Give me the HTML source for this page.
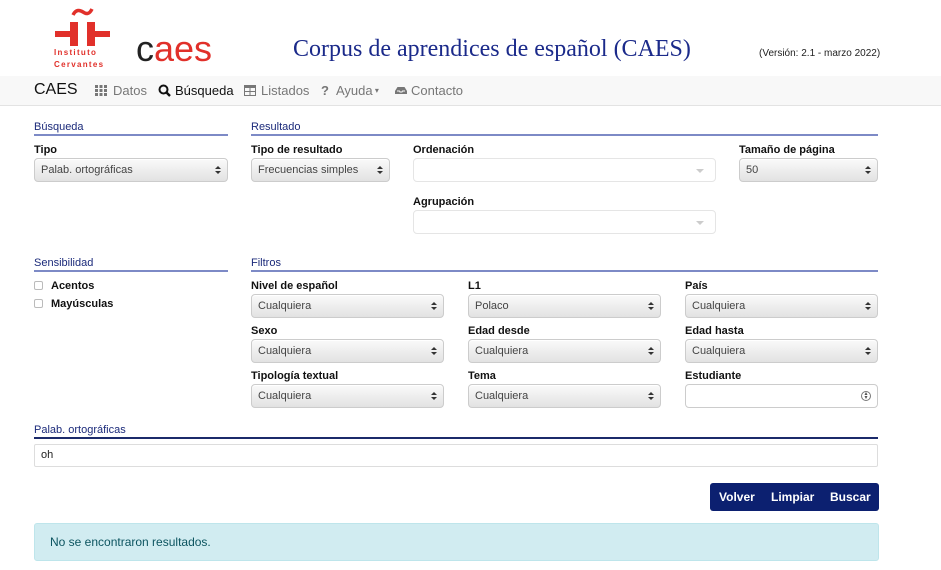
<!DOCTYPE html>
<html><head><meta charset="utf-8"><style>
*{box-sizing:border-box;margin:0;padding:0}
body{width:941px;height:570px;background:#fff;font-family:"Liberation Sans",Arial,sans-serif;position:relative;overflow:hidden;color:#212529}
.a{position:absolute}
.h{position:absolute;font-size:11px;color:#1b2a7a;border-bottom:2px solid #7d8ac6;height:15px;line-height:12px}
.l{position:absolute;font-size:11px;font-weight:bold;color:#111}
.s{position:absolute;height:24px;border:1px solid #ccc;border-radius:4px;background:linear-gradient(#fafafa,#e2e2e2);font-size:11px;color:#444;padding:0 0 0 6px;line-height:22px;box-shadow:inset 0 1px 0 #fff}
.s:after{content:"";position:absolute;right:6px;top:7px;width:0;height:0;border-left:3px solid transparent;border-right:3px solid transparent;border-bottom:3px solid #333}
.s:before{content:"";position:absolute;right:6px;top:12px;width:0;height:0;border-left:3px solid transparent;border-right:3px solid transparent;border-top:3px solid #333}
.e{position:absolute;height:24px;border:1px solid #e5e5e5;border-radius:4px;background:#fff}
.e:after{content:"";position:absolute;right:11px;top:10px;border-left:4px solid transparent;border-right:4px solid transparent;border-top:4px solid #ccc}
.n{position:absolute;top:83px;font-size:13px;color:#777}
.cb{display:inline-block;width:9px;height:9px;border:1px solid #bbb;border-radius:2px;margin-right:8px;vertical-align:-1px}
</style></head><body>
<svg class="a" style="left:70px;top:5px" width="26" height="14" viewBox="0 0 26 14"><path d="M3 10C6 4 10 5 13 7S19 10 22 4" fill="none" stroke="#e1302a" stroke-width="3.5"/></svg>
<div class="a" style="left:70px;top:22px;width:8px;height:24px;background:#e1302a"></div>
<div class="a" style="left:87px;top:22px;width:8px;height:24px;background:#e1302a"></div>
<div class="a" style="left:55px;top:31px;width:15px;height:6px;background:#e1302a"></div>
<div class="a" style="left:95px;top:31px;width:15px;height:6px;background:#e1302a"></div>
<div class="a" style="left:54px;top:47px;font-size:8px;font-weight:bold;color:#e1302a;letter-spacing:1.3px;line-height:12px">Instituto<br>Cervantes</div>
<div class="a" style="left:136px;top:28px;font-size:36px;letter-spacing:0;line-height:42px"><span style="color:#222">c</span><span style="color:#e1302a">aes</span></div>
<div class="a" style="left:293px;top:36px;font-family:'Liberation Serif',serif;font-size:24px;color:#1b2a8a">Corpus de aprendices de español (CAES)</div>
<div class="a" style="left:759px;top:48px;font-size:10px;color:#222">(Versión: 2.1 - marzo 2022)</div>
<div class="a" style="left:0;top:76px;width:941px;height:30px;background:#f8f8f8;border-bottom:1px solid #e3e3e3"></div>
<div class="a" style="left:34px;top:81px;font-size:16px;color:#111">CAES</div>
<svg class="a" style="left:95px;top:85px" width="12" height="11" viewBox="0 0 12 11"><g fill="#777"><rect x="0" y="0" width="3" height="3"/><rect x="4.5" y="0" width="3" height="3"/><rect x="9" y="0" width="3" height="3"/><rect x="0" y="4" width="3" height="3"/><rect x="4.5" y="4" width="3" height="3"/><rect x="9" y="4" width="3" height="3"/><rect x="0" y="8" width="3" height="3"/><rect x="4.5" y="8" width="3" height="3"/><rect x="9" y="8" width="3" height="3"/></g></svg>
<div class="n" style="left:113px">Datos</div>
<svg class="a" style="left:158px;top:84px" width="13" height="13" viewBox="0 0 13 13"><circle cx="5.5" cy="5.5" r="4" fill="none" stroke="#111" stroke-width="2"/><line x1="8.5" y1="8.5" x2="12" y2="12" stroke="#111" stroke-width="2.4"/></svg>
<div class="n" style="left:175px;color:#111">Búsqueda</div>
<svg class="a" style="left:244px;top:85px" width="12" height="11" viewBox="0 0 12 11"><rect x="0.5" y="0.5" width="11" height="10" fill="none" stroke="#777"/><rect x="0" y="0" width="12" height="3" fill="#777"/><line x1="6" y1="3" x2="6" y2="11" stroke="#777"/><line x1="0" y1="6.5" x2="12" y2="6.5" stroke="#777"/></svg>
<div class="n" style="left:261px">Listados</div>
<div class="n" style="left:321px;font-weight:bold">?</div>
<div class="n" style="left:336px">Ayuda<span style="font-size:8px;vertical-align:2px"> ▾</span></div>
<svg class="a" style="left:394px;top:86px" width="14" height="9" viewBox="0 0 14 9"><path d="M1 8V5L3.5 1h7L13 5v3z" fill="#777"/><path d="M3 5h2.5l.5 1h2l.5-1H11" stroke="#f8f8f8" fill="none"/></svg>
<div class="n" style="left:411px">Contacto</div>
<div class="h" style="left:34px;top:121px;width:194px">Búsqueda</div>
<div class="l" style="left:34px;top:144px">Tipo</div>
<div class="s" style="left:34px;top:158px;width:194px">Palab. ortográficas</div>
<div class="h" style="left:251px;top:121px;width:627px">Resultado</div>
<div class="l" style="left:251px;top:144px">Tipo de resultado</div>
<div class="s" style="left:251px;top:158px;width:139px">Frecuencias simples</div>
<div class="l" style="left:413px;top:144px">Ordenación</div>
<div class="e" style="left:413px;top:158px;width:303px"></div>
<div class="l" style="left:739px;top:144px">Tamaño de página</div>
<div class="s" style="left:739px;top:158px;width:139px">50</div>
<div class="l" style="left:413px;top:196px">Agrupación</div>
<div class="e" style="left:413px;top:210px;width:303px"></div>
<div class="h" style="left:34px;top:257px;width:194px">Sensibilidad</div>
<div class="l" style="left:34px;top:280px"><span class="cb"></span>Acentos</div>
<div class="l" style="left:34px;top:298px"><span class="cb"></span>Mayúsculas</div>
<div class="h" style="left:251px;top:257px;width:627px">Filtros</div>
<div class="l" style="left:251px;top:280px">Nivel de español</div>
<div class="s" style="left:251px;top:294px;width:193px">Cualquiera</div>
<div class="l" style="left:468px;top:280px">L1</div>
<div class="s" style="left:468px;top:294px;width:193px">Polaco</div>
<div class="l" style="left:685px;top:280px">País</div>
<div class="s" style="left:685px;top:294px;width:193px">Cualquiera</div>
<div class="l" style="left:251px;top:325px">Sexo</div>
<div class="s" style="left:251px;top:339px;width:193px">Cualquiera</div>
<div class="l" style="left:468px;top:325px">Edad desde</div>
<div class="s" style="left:468px;top:339px;width:193px">Cualquiera</div>
<div class="l" style="left:685px;top:325px">Edad hasta</div>
<div class="s" style="left:685px;top:339px;width:193px">Cualquiera</div>
<div class="l" style="left:251px;top:370px">Tipología textual</div>
<div class="s" style="left:251px;top:384px;width:193px">Cualquiera</div>
<div class="l" style="left:468px;top:370px">Tema</div>
<div class="s" style="left:468px;top:384px;width:193px">Cualquiera</div>
<div class="l" style="left:685px;top:370px">Estudiante</div>
<div class="a" style="left:685px;top:384px;width:193px;height:24px;border:1px solid #ccc;border-radius:4px"><div class="a" style="right:6px;top:6px;width:10px;height:10px;border:1px solid #777;border-radius:50%;font-size:6px;text-align:center;line-height:4px;color:#555">▴<br>▾</div></div>
<div class="h" style="left:34px;top:424px;width:844px;border-bottom:2px solid #1b2a6a">Palab. ortográficas</div>
<div class="a" style="left:34px;top:444px;width:844px;height:23px;border:1px solid #ddd;border-radius:2px;font-size:11px;line-height:21px;padding-left:6px;color:#222">oh</div>
<div class="a" style="left:710px;top:483px;width:169px;height:28px;background:#0c2070;border-radius:3px;color:#fff;font-size:12px;font-weight:bold;line-height:28px"><span class="a" style="left:9px">Volver</span><span class="a" style="left:61px">Limpiar</span><span class="a" style="left:120px">Buscar</span></div>
<div class="a" style="left:34px;top:523px;width:845px;height:38px;background:#d1ecf1;border:1px solid #bee5eb;border-radius:3px;color:#0c5460;font-size:12px;line-height:36px;padding-left:15px">No se encontraron resultados.</div>
</body></html>
